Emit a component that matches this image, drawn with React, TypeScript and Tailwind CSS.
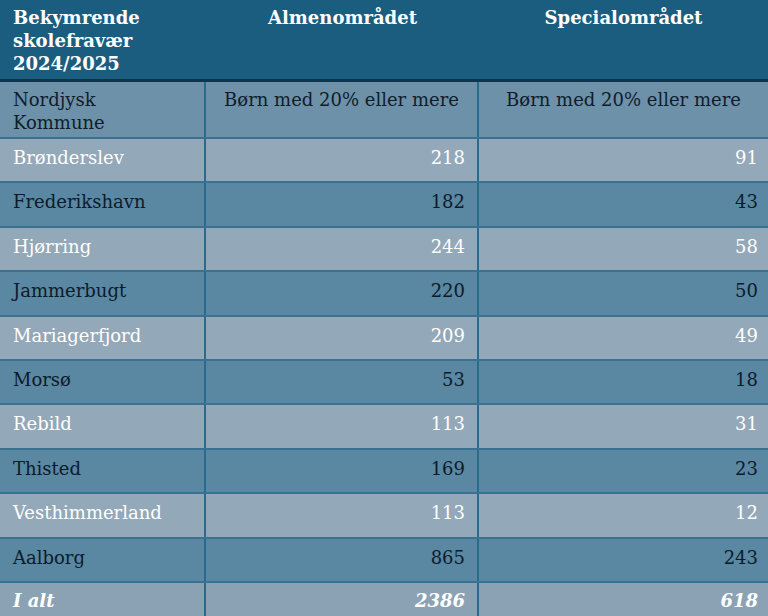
import React from 'react';

type Row = { name: string; alm: string; spec: string };

const rows: Row[] = [
  { name: 'Brønderslev', alm: '218', spec: '91' },
  { name: 'Frederikshavn', alm: '182', spec: '43' },
  { name: 'Hjørring', alm: '244', spec: '58' },
  { name: 'Jammerbugt', alm: '220', spec: '50' },
  { name: 'Mariagerfjord', alm: '209', spec: '49' },
  { name: 'Morsø', alm: '53', spec: '18' },
  { name: 'Rebild', alm: '113', spec: '31' },
  { name: 'Thisted', alm: '169', spec: '23' },
  { name: 'Vesthimmerland', alm: '113', spec: '12' },
  { name: 'Aalborg', alm: '865', spec: '243' },
];

const App = () => {
  return (
    <div
      className="w-[768px] h-[616px] overflow-hidden bg-[#8fa5b6] text-[18px] leading-[23px]"
      style={{ fontFamily: '"DejaVu Serif", "Liberation Serif", serif' }}
    >
      {/* Header */}
      <div className="grid grid-cols-[206px_273px_1fr] h-[82px] bg-[#1a5d7f] border-b-[3px] border-[#0e344d] text-white font-bold">
        <div className="pl-[13px] pt-[6px]">
          Bekymrende
          <br />
          skolefravær
          <br />
          2024/2025
        </div>
        <div className="text-center pt-[6px]">Almenområdet</div>
        <div className="text-center pt-[6px]">Specialområdet</div>
      </div>

      {/* Sub header */}
      <div className="grid grid-cols-[206px_273px_1fr] h-[57px] bg-[#6c91a9] text-[#0f1d2b] border-b-2 border-[#3b7190]">
        <div className="pl-[13px] pt-[6px] border-r-2 border-[#2b6a8b]">
          Nordjysk
          <br />
          Kommune
        </div>
        <div className="text-center pt-[6px] border-r-2 border-[#2b6a8b]">Børn med 20% eller mere</div>
        <div className="text-center pt-[6px]">Børn med 20% eller mere</div>
      </div>

      {rows.map((r, i) => {
        const light = i % 2 === 0;
        return (
          <div
            key={r.name}
            className={
              light
                ? 'grid grid-cols-[206px_273px_1fr] h-[44.4px] bg-[#93a8b8] text-white border-b-2 border-[#3b7190]'
                : 'grid grid-cols-[206px_273px_1fr] h-[44.4px] bg-[#5a87a2] text-[#0c1b2b] border-b-2 border-[#3b7190]'
            }
          >
            <div className="pl-[13px] pt-[7px] border-r-2 border-[#2b6a8b]">{r.name}</div>
            <div className="text-right pr-[12px] pt-[7px] border-r-2 border-[#2b6a8b]">{r.alm}</div>
            <div className="text-right pr-[10px] pt-[7px]">{r.spec}</div>
          </div>
        );
      })}

      {/* Total */}
      <div className="grid grid-cols-[206px_273px_1fr] h-[40px] bg-[#8ba2b5] text-white font-bold italic">
        <div className="pl-[13px] pt-[6px] border-r-2 border-[#2b6a8b]">I alt</div>
        <div className="text-right pr-[12px] pt-[6px] border-r-2 border-[#2b6a8b]">2386</div>
        <div className="text-right pr-[10px] pt-[6px]">618</div>
      </div>
    </div>
  );
};

export default App;
